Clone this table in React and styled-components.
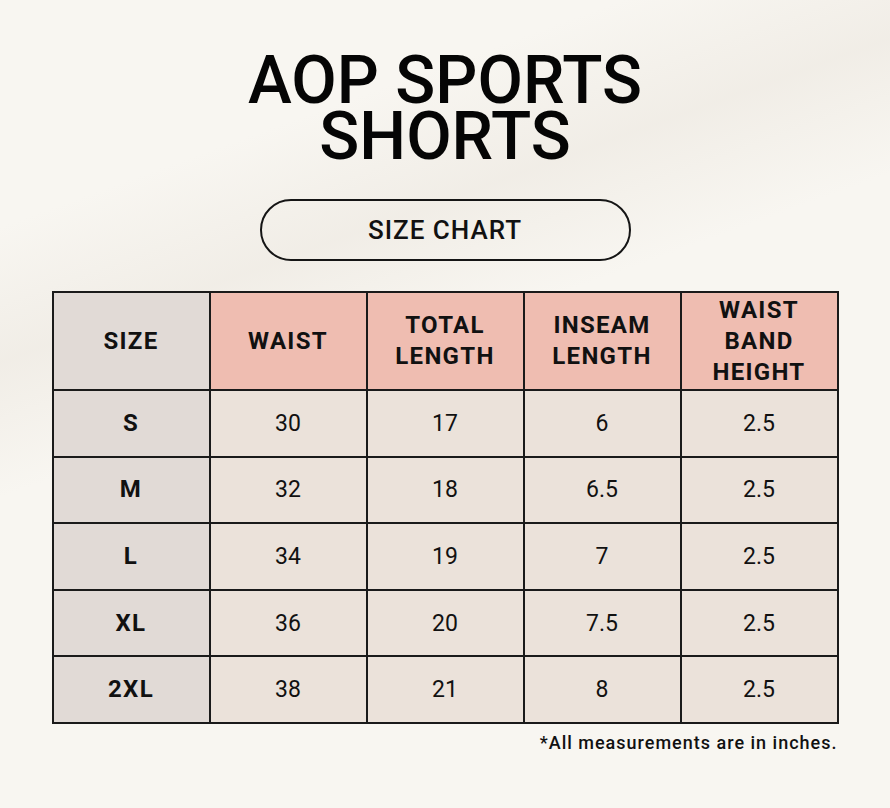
import React from 'react'
import styled, { createGlobalStyle } from 'styled-components'

const GlobalStyle = createGlobalStyle`
  html, body { margin: 0; padding: 0; }
  body {
    font-family: Roboto, "Liberation Sans", Arial, sans-serif;
    color: #111;
  }
`

const Page = styled.div`
  width: 890px;
  height: 808px;
  box-sizing: border-box;
  padding-top: 49px;
  display: flex;
  flex-direction: column;
  align-items: center;
  background:
    linear-gradient(160deg, rgba(255,255,255,0) 20%, rgba(235,230,222,0.55) 32%, rgba(255,255,255,0) 44%),
    #f8f6f1;
`

const Title = styled.h1`
  margin: 0;
  font-size: 66px;
  font-weight: 500;
  line-height: 56px;
  padding: 4px 0;
  text-align: center;
  color: #050505;
`

const Pill = styled.div`
  margin-top: 30px;
  width: 371px;
  height: 62px;
  box-sizing: border-box;
  border: 2px solid #151515;
  border-radius: 31px;
  display: flex;
  align-items: center;
  justify-content: center;
  font-size: 26px;
  font-weight: 500;
  letter-spacing: 1px;
`

const Table = styled.div`
  margin-top: 30px;
  display: grid;
  grid-template-columns: repeat(5, 157px);
  grid-template-rows: 98px repeat(5, 66.6px);
  border-top: 2px solid #1a1a1a;
  border-left: 2px solid #1a1a1a;
`

const Cell = styled.div`
  display: flex;
  align-items: center;
  justify-content: center;
  text-align: center;
  border-right: 2px solid #1a1a1a;
  border-bottom: 2px solid #1a1a1a;
  font-size: ${p => p.$bold ? '24px' : '23px'};
  line-height: 31px;
  background: ${p => p.$kind === 'head' ? '#efbdb1' : p.$kind === 'size' ? '#e1dad6' : '#ebe2da'};
  font-weight: ${p => p.$bold ? 700 : 400};
  letter-spacing: ${p => p.$bold ? '1.3px' : '0'};
`

const Note = styled.div`
  width: 785px;
  margin-top: 8px;
  text-align: right;
  font-size: 18px;
  font-weight: 500;
  letter-spacing: 1px;
`

const heads = ['WAIST', 'TOTAL\nLENGTH', 'INSEAM\nLENGTH', 'WAIST\nBAND\nHEIGHT']
const rows = [
  ['S', '30', '17', '6', '2.5'],
  ['M', '32', '18', '6.5', '2.5'],
  ['L', '34', '19', '7', '2.5'],
  ['XL', '36', '20', '7.5', '2.5'],
  ['2XL', '38', '21', '8', '2.5'],
]

const lines = text => text.split('\n').map((t, i) => <React.Fragment key={i}>{i > 0 && <br />}{t}</React.Fragment>)

export default function App() {
  return (
    <Page>
      <GlobalStyle />
      <Title>AOP SPORTS<br />SHORTS</Title>
      <Pill>SIZE CHART</Pill>
      <Table>
        <Cell $kind='size' $bold>SIZE</Cell>
        {heads.map(h => <Cell key={h} $kind='head' $bold>{lines(h)}</Cell>)}
        {rows.map(r => r.map((v, i) => (
          <Cell key={r[0] + i} $kind={i === 0 ? 'size' : 'body'} $bold={i === 0}>{v}</Cell>
        )))}
      </Table>
      <Note>*All measurements are in inches.</Note>
    </Page>
  )
}
